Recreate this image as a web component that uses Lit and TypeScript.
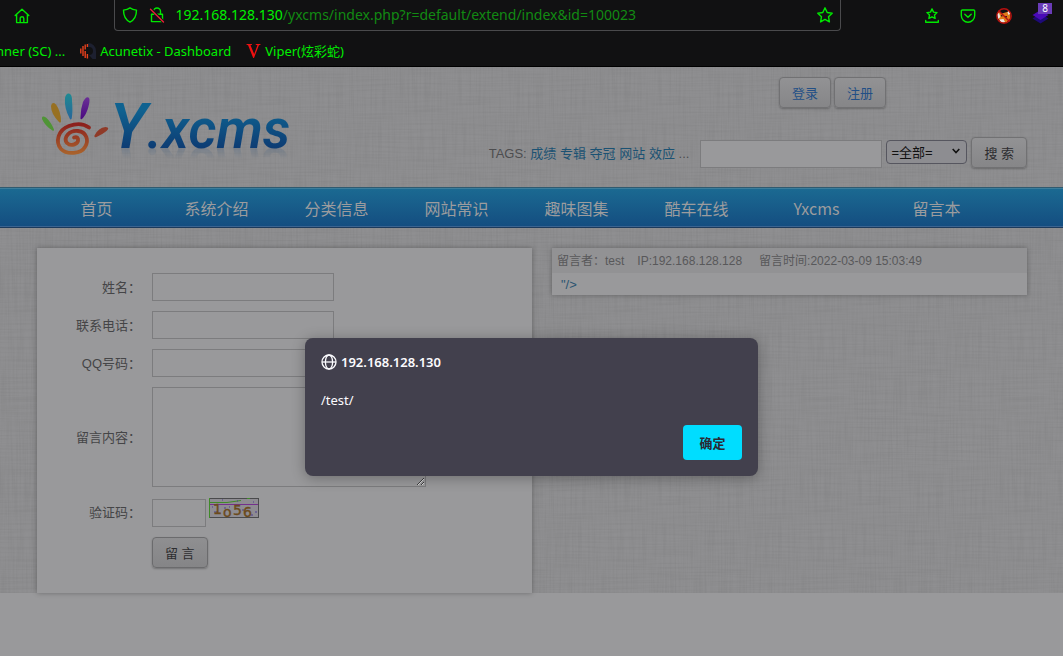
import { LitElement, html, css } from "lit";
import { customElement, state } from "lit/decorators.js";

const linen = css`url("data:image/svg+xml,%3Csvg xmlns='http://www.w3.org/2000/svg' width='200' height='200'%3E%3Cfilter id='a' x='0' y='0' width='100%25' height='100%25'%3E%3CfeTurbulence type='fractalNoise' baseFrequency='.02 .6' numOctaves='2' stitchTiles='stitch'/%3E%3CfeColorMatrix values='0 0 0 0 0 0 0 0 0 0 0 0 0 0 0 .4 0 0 0 -.15'/%3E%3C/filter%3E%3Cfilter id='b' x='0' y='0' width='100%25' height='100%25'%3E%3CfeTurbulence type='fractalNoise' baseFrequency='.6 .02' numOctaves='2' seed='5' stitchTiles='stitch'/%3E%3CfeColorMatrix values='0 0 0 0 0 0 0 0 0 0 0 0 0 0 0 .4 0 0 0 -.15'/%3E%3C/filter%3E%3Cg opacity='.2'%3E%3Crect width='200' height='200' filter='url(%23a)'/%3E%3Crect width='200' height='200' filter='url(%23b)'/%3E%3C/g%3E%3C/svg%3E")`;

@customElement("browser-bar")
class BrowserBar extends LitElement {
  static styles = css`
    :host {
      display: block;
      background: #111112;
      border-bottom: 1px solid #000;
      color: #00f000;
      font: 13px/18px "Noto Sans", "Noto Sans CJK SC", sans-serif;
    }
    svg { display: block; flex: none; fill: none; stroke: #00e800; stroke-width: 1.4; stroke-linejoin: round; stroke-linecap: round; }
    .row { display: flex; align-items: center; justify-content: space-between; height: 31px; padding: 0 13px 0 14px; }
    .tool { display: block; padding: 0; border: 0; background: none; position: relative; }
    .address {
      display: flex; align-items: center; gap: 11px; box-sizing: border-box;
      flex: 0 1 727px; height: 31px; padding: 0 7px;
      border: 1px solid #4a4a4c; border-top: 0; border-radius: 0 0 4px 4px;
      font-size: 14px;
    }
    .url { flex: 1; white-space: nowrap; }
    .path { color: #128a12; }
    .tools { display: flex; gap: 20px; }
    .badge {
      position: absolute; left: 6px; top: -5px; width: 14px; height: 11px;
      background: #6a3cb8; color: #fff; font: 10px/11px "Noto Sans", sans-serif; text-align: center;
    }
    .marks { display: flex; align-items: center; gap: 15px; height: 35px; margin-left: -4px; box-sizing: border-box; padding-top: 5px; white-space: nowrap; }
    a { display: flex; align-items: center; gap: 4px; color: inherit; text-decoration: none; }
  `;
  render() {
    return html`
      <div class="row">
        <button class="tool" aria-label="主页">
          <svg width="16" height="16" viewBox="0 0 16 16"><path d="M1.2 7.6 8 1.2l6.8 6.4M2.600 6.600v8h10.800v-8M6.200 14.400V10.500a1.800 1.800 0 0 1 3.600 0v3.900"/></svg>
        </button>
        <div class="address">
          <svg width="16" height="16" viewBox="0 0 16 16"><path d="M8 .9c2 1.500 4 2 6.500 2.200 0 5.500-1.500 9.700-6.500 12C3 12.800 1.500 8.600 1.500 3.100 4 2.900 6 2.400 8 .9z"/></svg>
          <svg width="16" height="16" viewBox="0 0 16 16"><path d="M4.500 7V4.500a3.500 3.500 0 0 1 7 0V7M2.500 7.300h11v7.300h-11z"/><path stroke="#111112" stroke-width="3" d="M2 2l12.500 13"/><path stroke="#e8203a" d="M1.500 2.300l13 12.700"/></svg>
          <span class="url">192.168.128.130<span class="path">/yxcms/index.php?r=default/extend/index&amp;id=100023</span></span>
          <button class="tool" aria-label="收藏"><svg width="16" height="16" viewBox="0 0 16 16"><path d="M8 .8l2.200 4.700 5 .7-3.700 3.500.9 5.200L8 12.400l-4.400 2.500.9-5.200L.8 6.200l5-.7z"/></svg></button>
        </div>
        <div class="tools">
          <button class="tool" aria-label="书签"><svg width="16" height="16" viewBox="0 0 16 16"><path d="M8 .9l1.500 3.200 3.500.5-2.500 2.400.6 3.400L8 8.800l-3.100 1.600.6-3.400L3 4.600l3.500-.5zM1.700 12.500v1.700h12.600v-1.700"/></svg></button>
          <button class="tool" aria-label="Pocket"><svg width="16" height="16" viewBox="0 0 16 16"><path d="M2.300 2h11.400q1 0 1 1v4.500a6.700 6.700 0 0 1-13.400 0V3q0-1 1-1zM4.800 6.300 8 9.300l3.200-3"/></svg></button>
          <button class="tool" aria-label="FoxyProxy"><svg width="16" height="16" viewBox="0 0 16 16"><g stroke="none"><path fill="#e07a18" d="M2 3l4 2.500L11 4l3-1 .5 7-4 4.500-5.500.5L2 10z"/><path fill="#ece6e0" d="M1 6l2-1 1.500 4L2 11zM3.500 11.500l4-.5 1.500 3-4 1zM12.500 2.500l2 3-2 1.500-1-2.500z"/><path fill="#3a2014" d="M9 8h2v1.500H9zM5 7h1.500v1.500H5z"/></g><circle cx="8" cy="8" r="7.200" stroke="#b81010"/><path stroke="#b81010" d="M3 3l10 10"/></svg></button>
          <button class="tool" aria-label="Wappalyzer"><svg width="18" height="16" viewBox="0 0 18 16"><g stroke="none"><path fill="#1e0a78" d="M.5 10.500l8-5 8 5-8 5z"/><path fill="#4a0ab8" d="M.5 7l8-5 8 5-8 5z"/></g></svg><span class="badge">8</span></button>
        </div>
      </div>
      <nav class="marks">
        <a href="#">nner (SC) ...</a>
        <a href="#"><svg width="16" height="16" viewBox="0 0 16 16"><path stroke="none" fill="#1d2030" d="M8 0a8 8 0 0 1 8 8v8h-3.500L9 12a4 4 0 0 0 0-8H8z"/><path stroke="#e8401c" stroke-linecap="butt" d="M.8 5.500v5M3 3v10M5.200 1.500v5M5.200 8v7M7.400 1v3M7.400 11v4.500"/></svg>Acunetix - Dashboard</a>
        <a href="#"><svg width="15" height="14" viewBox="0 0 14 14"><path fill="#f01010" stroke="none" d="M0 0h5.500v.8L4 1.200 7.700 10l3.200-8.800L9.200.8V0H14v.8l-1.600.5L7.500 14h-.8L1.600 1.200 0 .8z"/></svg>Viper(炫彩蛇)</a>
      </nav>`;
  }
}

@customElement("site-header")
class SiteHeader extends LitElement {
  static styles = css`
    :host { display: block; color: #4d4d4f; }
    .top { display: flex; justify-content: space-between; align-items: flex-start; width: min(991px, 100%); height: 120px; margin: 0 auto; box-sizing: border-box; padding: 10px 0 0 1px; }
    .logo { display: flex; align-items: flex-start; padding: 16px 0 0 5px; text-decoration: none; }
    .logo svg { display: block; }
    .word {
      font: italic 600 55px/64px Roboto, sans-serif; padding-right: 4px; margin-top: 2px;
      background: linear-gradient(#0f6290 15px, #0d3a72 55px);
      -webkit-background-clip: text; background-clip: text; color: transparent;
      -webkit-box-reflect: below -26px linear-gradient(transparent 64%, rgba(0,0,0,.2) 84%);
    }
    .initial { font-size: 62px; }
    .right { display: grid; gap: 29px; }
    .account { display: flex; justify-content: flex-end; gap: 3px; padding-right: 141px; }
    .btn {
      box-sizing: border-box; height: 31px; padding: 0 12px; border: 1px solid #717173; border-radius: 4px;
      background: linear-gradient(#929294, #868688); box-shadow: 0 1px 2px rgba(0,0,0,.25);
      font: 13px/31px "Liberation Sans", "Noto Sans CJK SC", sans-serif; color: #2d2d30; text-decoration: none;
    }
    .account .btn { color: #224f86; }
    .search { display: flex; align-items: flex-start; gap: 4px; }
    .tags { margin-right: 7px; line-height: 34px; }
    a { color: #1b5273; text-decoration: none; }
    .query { box-sizing: border-box; width: 182px; height: 28px; margin: 3px 0 0; border: 1px solid #7c7c7e; background: #99999b; padding: 4px; }
    .pick { display: grid; margin-top: 3px; }
    .pick > * { grid-area: 1 / 1; }
    .pick svg { justify-self: end; margin: 8px 7px; pointer-events: none; }
    select {
      appearance: none; width: 81px; height: 24px; padding: 0 4px; border: 1px solid #56565f; border-radius: 4px;
      background: #8d8d91; color: #111; font: 13px "Liberation Sans", "Noto Sans CJK SC", sans-serif;
    }
    nav { background: linear-gradient(#1b6a92, #144d80); border-top: 1px solid #2f5a70; border-bottom: 1px solid #1c3a5c; box-shadow: inset 0 1px #3b7d9b, inset 0 -1px #3a6390; }
    ul { display: flex; width: min(990px, 100%); margin: 0 auto; padding: 0; list-style: none; }
    li { flex: 0 1 120px; text-align: center; font: 16px/39px "Noto Sans CJK SC", sans-serif; height: 39px; }
    li a { color: #9c9c9e; display: block; padding-top: 1px; }
  `;
  private items = ["首页", "系统介绍", "分类信息", "网站常识", "趣味图集", "酷车在线", "Yxcms", "留言本"];
  private tags = ["成绩", "专辑", "夺冠", "网站", "效应"];
  render() {
    return html`
      <header class="top">
        <a class="logo" href="#" aria-label="Yxcms">
          <svg width="68" height="64" viewBox="0 0 68 64">
            <defs>
              <linearGradient id="palm" x2="0" y2="1"><stop stop-color="#8c1f1c"/><stop offset="1" stop-color="#a8612c"/></linearGradient>
              <linearGradient id="violet" x2="0" y2="1"><stop stop-color="#6a2f96"/><stop offset="1" stop-color="#4a0a80"/></linearGradient>
              <linearGradient id="teal" x2="0" y2="1"><stop stop-color="#1f8a92"/><stop offset="1" stop-color="#28659a"/></linearGradient>
            </defs>
            <path fill="#4f9436" d="M0 26q-.5-4 4-1.500Q9 29 12 36.500q0 2-1.500 1Q3 33 0 26z"/>
            <path fill="#977022" d="M9 13q1-5 5-1.500 5 7 5 17-.5 2-2 .5Q9 21 9 13z"/>
            <path fill="url(#teal)" d="M23 5q1-5 4-4.500 3 .5 3 7 1 11-.3 18-1 2-2 0Q22 15 23 5z"/>
            <path fill="url(#violet)" d="M41 9q3-6 5.500-4.500 2 1 0 9-2 8-6.500 12.500-2 1-1.500-1.500Q38.500 16 41 9z"/>
            <path fill="#8f3a28" d="M52.500 42.500q4-8 11-8.500 5 .5 1 4Q61 41 54.500 44q-2.500 1-2-1.500z"/>
            <path fill="none" stroke="url(#palm)" stroke-width="3.800" stroke-linecap="round" d="M47 34.500q-8-6-20-1.500c-11 4-14 16-8 23 6 6 20 5 24-2 4-6 2-15-7-16-9-1-15 7-11 12 4 4 12 1 11-4q-.8-2.500-4-1.500"/>
          </svg>
          <span class="word"><span class="initial">Y</span>.xcms</span>
        </a>
        <div class="right">
          <div class="account"><a class="btn" href="#">登录</a><a class="btn" href="#">注册</a></div>
          <form class="search" @submit=${(e: Event) => e.preventDefault()}>
            <span class="tags">TAGS: ${this.tags.map((t) => html`<a href="#">${t}</a> `)}...</span>
            <input class="query" type="text" aria-label="搜索">
            <label class="pick">
              <select aria-label="范围"><option>=全部=</option></select>
              <svg width="8" height="6" viewBox="0 0 8 6"><path d="M.7 1 4 4.500 7.300 1" fill="none" stroke="#111" stroke-width="1.600"/></svg>
            </label>
            <button class="btn">搜 索</button>
          </form>
        </div>
      </header>
      <nav><ul>${this.items.map((t) => html`<li><a href="#">${t}</a></li>`)}</ul></nav>`;
  }
}

@customElement("guest-book")
class GuestBook extends LitElement {
  static styles = css`
    :host { display: flex; align-items: flex-start; gap: 20px; width: min(991px, 100%); box-sizing: border-box; margin: 0 auto; padding: 20px 0 0 1px; color: #454547; }
    .panel { background: #99999b; box-shadow: 0 0 5px rgba(0,0,0,.3); }
    form { flex: 495 1 0; display: grid; grid-template-columns: 104px 1fr; gap: 10px 11px; box-sizing: border-box; padding: 25px 0; align-items: center; justify-items: start; }
    label { justify-self: end; padding-top: 2px; }
    input, textarea { display: block; box-sizing: border-box; margin: 0; padding: 4px; border: 1px solid #7c7c7e; background: #99999b; font: inherit; color: inherit; }
    input { width: 182px; height: 28px; }
    textarea { width: 274px; height: 100px; }
    .code { width: 54px; margin-top: 2px; }
    .check { display: flex; align-items: flex-start; gap: 3px; }
    .captcha { display: block; margin-top: 1px; overflow: visible; }
    .send {
      grid-column: 2; height: 31px; padding: 2px 12px 0; border: 1px solid #6b6b6d; border-radius: 4px;
      background: linear-gradient(#8f8f91, #858587); box-shadow: 0 1px 2px rgba(0,0,0,.25);
      font: 13px/26px "Liberation Sans", "Noto Sans CJK SC", sans-serif; color: #2d2d30;
    }
    article { flex: 475 1 0; font-size: 12px; }
    .meta { display: flex; height: 25px; padding: 0 5px; line-height: 27px; background: #929294; color: #58585a; }
    .who { margin-right: 13px; }
    .ip { margin-right: 17px; }
    .body { margin: 0; padding: 2px 9px 0; line-height: 20px; font-size: 13px; color: #2a5470; }
  `;
  render() {
    return html`
      <form class="panel" @submit=${(e: Event) => e.preventDefault()}>
        <label for="name">姓名：</label><input id="name">
        <label for="tel">联系电话：</label><input id="tel">
        <label for="qq">QQ号码：</label><input id="qq">
        <label for="content">留言内容：</label><textarea id="content"></textarea>
        <label for="code">验证码：</label>
        <div class="check">
          <input class="code" id="code">
          <svg class="captcha" width="50" height="20" viewBox="0 0 50 20" role="img">
            <rect x=".5" y=".5" width="49" height="19" fill="#8e8c92" stroke="#4a4a4c"/>
            <path d="M.5 0v20M1 4.500h17l14-2M38 .5h3" stroke="#3f8a28" fill="none"/>
            <path d="M1 6.500h48" stroke="#74308c"/>
            <path d="M5 14h4M20 9h1M33 12h2M44 4h1M46 14h2M13 2h1M42 17h2M28 3h1M15 10h2M3 9h1" stroke="#4c3c90"/>
            <g fill="#6b4a1c" stroke="#6b4a1c" stroke-width=".4" font-family="DejaVu Sans" font-size="14"><text x="4" y="16">1</text><text x="14" y="19">o</text><text x="24" y="17">5</text><text x="34" y="19">6</text></g>
          </svg>
        </div>
        <button class="send">留 言</button>
      </form>
      <article class="panel">
        <div class="meta"><span class="who">留言者：test</span><span class="ip">IP:192.168.128.128</span><span>留言时间:2022-03-09 15:03:49</span></div>
        <p class="body">"/&gt;</p>
      </article>`;
  }
}

@customElement("app-root")
class AppRoot extends LitElement {
  static styles = css`
    :host { display: block; position: relative; min-height: 100vh; background: #99999b; font: 13px/20px "Liberation Sans", "Noto Sans CJK SC", sans-serif; }
    .page { background: #8f8f91 ${linen}; }
    dialog {
      position: absolute; inset: 338px 0 auto; margin: 0 auto;
      box-sizing: border-box; width: 453px; height: 138px; padding: 15px 16px 16px; border: 0; border-radius: 8px;
      display: flex; flex-direction: column; background: #42404d; color: #fbfbfe; box-shadow: 0 2px 14px rgba(0,0,0,.3);
      font: 13px/18px "Noto Sans", "Noto Sans CJK SC", sans-serif;
    }
    .origin { display: flex; align-items: center; gap: 4px; font-weight: 600; font-size: 13px; margin: 0; }
    .message { margin: 20px 0 0; }
    .ok { align-self: flex-end; margin-top: auto; width: 59px; height: 35px; border: 0; border-radius: 4px; background: #00ddff; color: #2b2a33; font: 600 13px "Noto Sans CJK SC", sans-serif; }
  `;
  @state() private open = true;
  render() {
    return html`
      <browser-bar></browser-bar>
      <div class="page"><site-header></site-header><guest-book></guest-book></div>
      ${this.open
        ? html`<dialog open>
            <h1 class="origin"><svg width="16" height="16" viewBox="0 0 16 16" fill="none" stroke="#fbfbfe" stroke-width="1.300"><circle cx="8" cy="8" r="7"/><ellipse cx="8" cy="8" rx="3.600" ry="7"/><path d="M1 8h14"/></svg>192.168.128.130</h1>
            <p class="message">/test/</p>
            <button class="ok" @click=${() => (this.open = false)}>确定</button>
          </dialog>`
        : null}`;
  }
}
